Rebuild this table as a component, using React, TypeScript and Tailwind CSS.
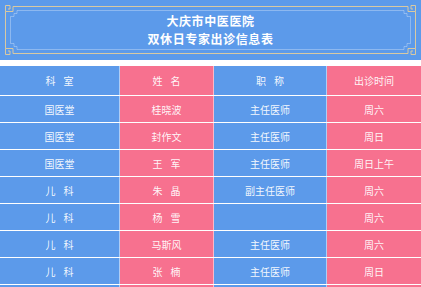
import React from 'react'

const rows = [
  ['国医堂', '桂晓波', '主任医师', '周六'],
  ['国医堂', '封作文', '主任医师', '周日'],
  ['国医堂', '王 军', '主任医师', '周日上午'],
  ['儿 科', '朱 晶', '副主任医师', '周六'],
  ['儿 科', '杨 雪', '', '周六'],
  ['儿 科', '马斯风', '主任医师', '周六'],
  ['儿 科', '张 楠', '主任医师', '周日'],
  ['', '', '', ''],
];

const colBg = ['bg-[#5c9aea]', 'bg-[#f7718f]', 'bg-[#5c9aea]', 'bg-[#f7718f]'];
const colBorder = ['border-r', 'border-r', 'border-r', ''];

const Frame = () => (
  <svg className="absolute inset-0" width="421" height="60" viewBox="0 0 421 60" fill="none">
    {/* outer frame */}
    <path
      d="M13 6.5 H408 M13 53.5 H408 M5.5 14 V46 M415.5 14 V46
         M13 6.5 V11.5 H5.5 V14 M13 53.5 V48.5 H5.5 V46
         M408 6.5 V11.5 H415.5 V14 M408 53.5 V48.5 H415.5 V46
         M5.5 11.5 V5.5 H10 V9 H8
         M5.5 48.5 V54.5 H10 V51 H8
         M415.5 11.5 V5.5 H411 V9 H413
         M415.5 48.5 V54.5 H411 V51 H413"
      stroke="#d8c9a2"
      strokeWidth="1"
    />
    {/* inner frame */}
    <path
      d="M17 10.5 H404 V13.5 H407 V16.5 H410.5 V43.5 H407 V46.5 H404 V49.5 H17 V46.5 H14 V43.5 H10.5 V16.5 H14 V13.5 H17 Z"
      stroke="#ffffff"
      strokeOpacity="0.3"
      strokeWidth="1"
    />
  </svg>
);

// two-char names get a small gap in between, like the original sheet
const CellText = ({ text }: { text: string }) => {
  const parts = text.split(' ');
  return (
    <span className="flex gap-[8px]">
      {parts.map((p, i) => <span key={i}>{p}</span>)}
    </span>
  );
};

const App = () => {
  return (
    <div className="w-[421px] h-[287px] overflow-hidden bg-white" style={{ fontFamily: '"Noto Sans CJK SC", "Noto Sans", sans-serif' }}>
      <div className="relative h-[60px] bg-[#5c9aea] flex flex-col items-center justify-center">
        <Frame />
        <div className="text-white font-bold text-[12px] leading-[18px] tracking-[0.6px]">大庆市中医医院</div>
        <div className="text-white font-bold text-[12px] leading-[18px] tracking-[0.6px]">双休日专家出诊信息表</div>
      </div>
      <div className="mt-[6px]">
        <div className="grid grid-cols-[120px_94px_113px_94px] h-[30px] border-b border-white/50">
          {['科 室', '姓 名', '职 称', '出诊时间'].map((t, i) => (
            <div key={i} className={`${colBg[i]} ${colBorder[i]} border-white/50 flex items-center justify-center text-white/95 text-[10px]`}>
              <CellText text={t} />
            </div>
          ))}
        </div>
        {rows.map((r, ri) => (
          <div key={ri} className="grid grid-cols-[120px_94px_113px_94px] h-[27px] border-b border-white/50">
            {r.map((t, i) => (
              <div key={i} className={`${colBg[i]} ${colBorder[i]} border-white/50 flex items-center justify-center text-white/95 text-[10px]`}>
                <CellText text={t} />
              </div>
            ))}
          </div>
        ))}
      </div>
    </div>
  );
};

export default App;
